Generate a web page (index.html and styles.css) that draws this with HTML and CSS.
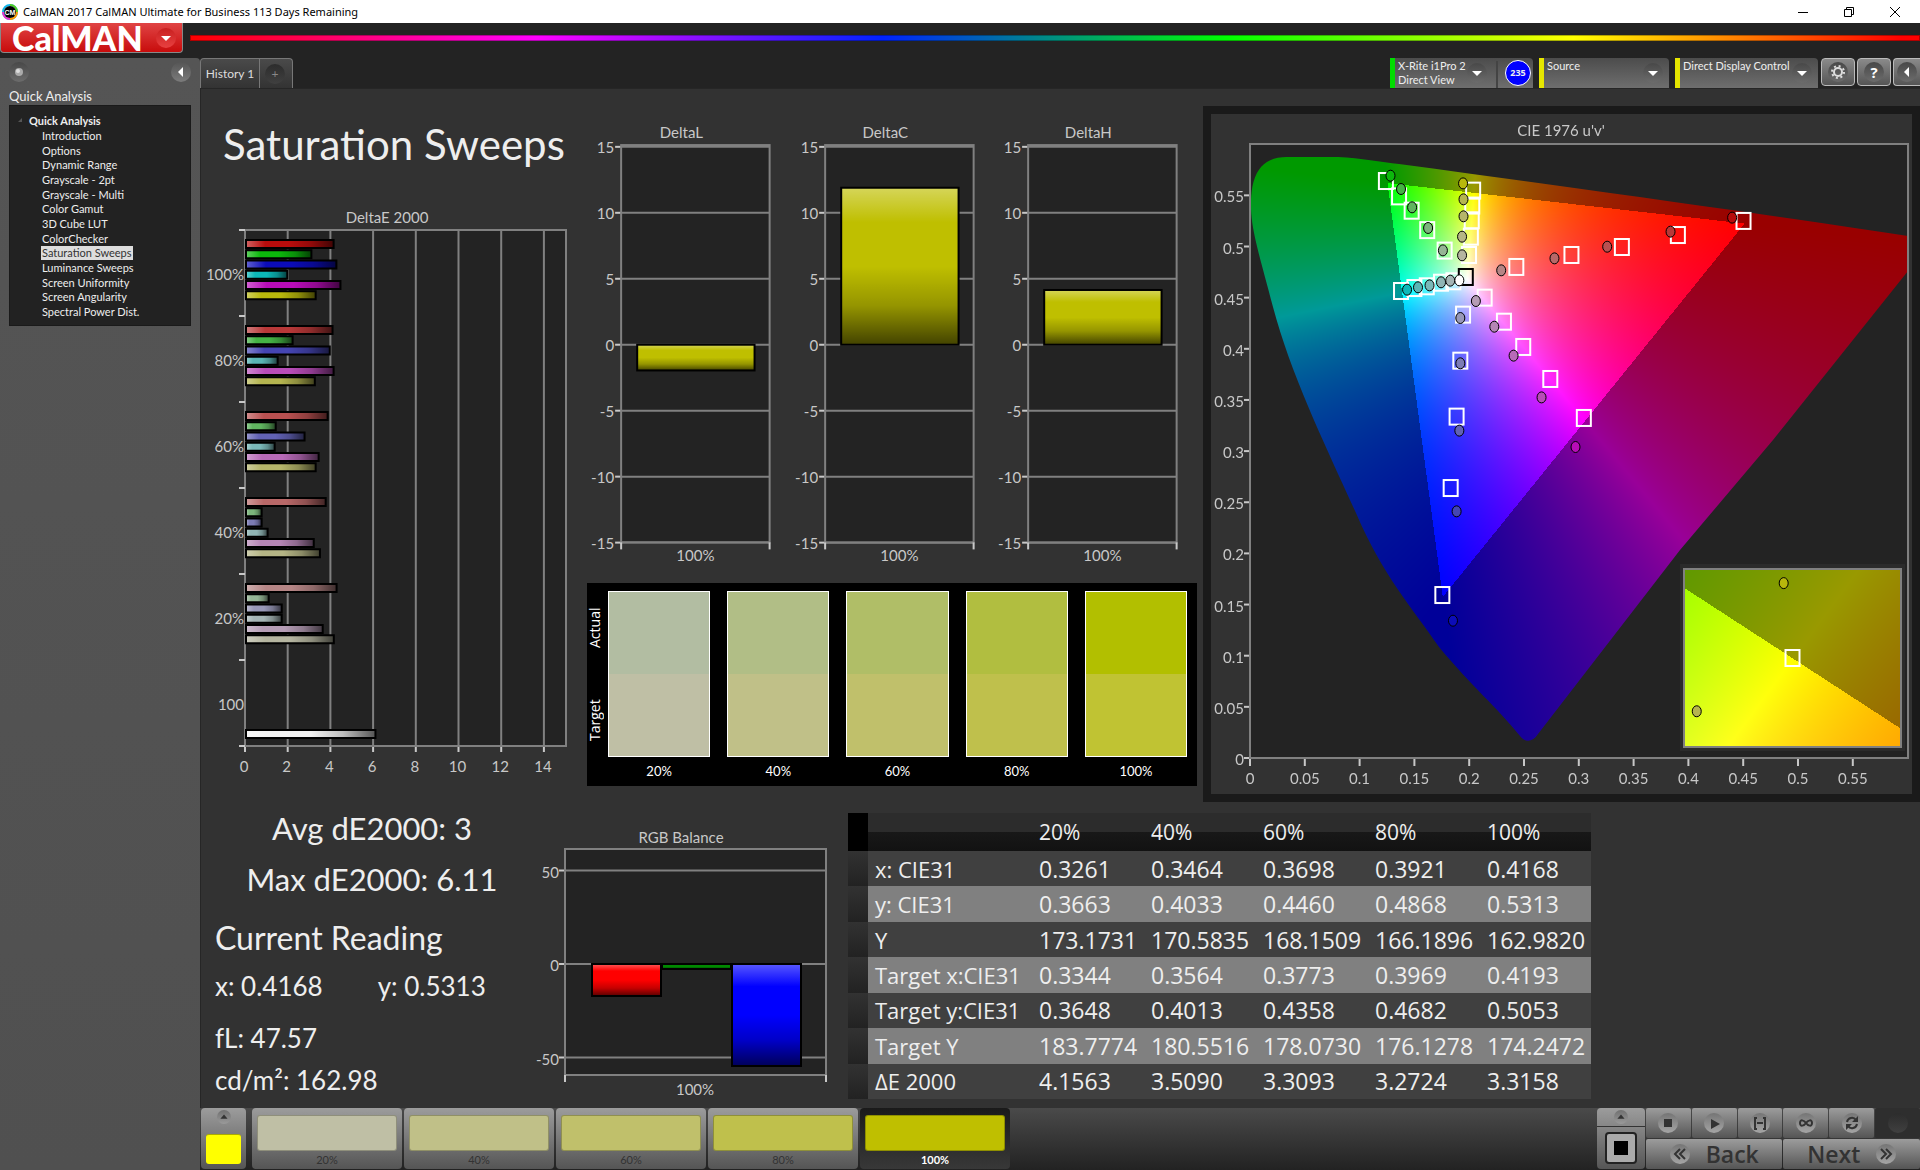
FILE: index.html
```html
<!DOCTYPE html>
<html lang="en">
<head>
    <meta charset="UTF-8">
    <meta name="viewport" content="width=device-width, initial-scale=1.0">
    <title>CalMAN 2017 CalMAN Ultimate for Business</title>
    <link rel="stylesheet" href="styles.css">
</head>
<body>
    <!-- window title -->
    <div class="titlebar">
        <svg class="app-icon" viewBox="0 0 16 16">
            <circle cx="8" cy="8" r="7" fill="none" stroke="#12b5e8" stroke-width="2"/>
            <path d="M8 1a7 7 0 0 1 7 7" fill="none" stroke="#5c2" stroke-width="2"/>
            <path d="M15 8a7 7 0 0 1-7 7" fill="none" stroke="#f90" stroke-width="2"/>
            <path d="M8 15a7 7 0 0 1-7-7" fill="none" stroke="#e3c" stroke-width="2"/>
            <circle cx="8" cy="8" r="6" fill="#000"/>
            <text x="8" y="11" text-anchor="middle">CM</text>
        </svg>
        <span class="window-title">CalMAN 2017 CalMAN Ultimate for Business 113 Days Remaining</span>
        <div class="window-buttons">
            <button aria-label="Minimize"><svg viewBox="0 0 12 12"><path d="M1 6.500h10"/></svg></button>
            <button aria-label="Restore"><svg viewBox="0 0 12 12"><path d="M1.500 3.500h7v7h-7zM3.500 3.500v-2h7v7h-2"/></svg></button>
            <button aria-label="Close"><svg viewBox="0 0 12 12"><path d="M1 1l10 10M11 1l-10 10"/></svg></button>
        </div>
    </div>

    <div class="brandbar">
        <button class="logo">CalMAN <span class="knob red"><svg viewBox="0 0 20 20"><path d="M5 8h10l-5 5z"/></svg></span></button>
        <div class="rainbow"></div>
    </div>

    <div class="app">
        <aside class="sidebar">
            <div class="sidebar-top">
                <span class="knob"><svg viewBox="0 0 20 20"><circle cx="10" cy="10" r="4" fill="#aaa"/><circle cx="9" cy="9" r="2" fill="#ddd"/></svg></span>
                <button class="knob light" aria-label="Collapse"><svg viewBox="0 0 20 20"><path d="M12 5v10l-5-5z"/></svg></button>
            </div>
            <div class="sidebar-title">Quick Analysis</div>
            <nav class="tree">
                <div class="tree-head">
                    <svg viewBox="0 0 6 6"><path d="M5 1v4H1z" fill="#555"/></svg>Quick Analysis
                </div>
                <ul>
                    <li><a href="#">Introduction</a></li>
                    <li><a href="#">Options</a></li>
                    <li><a href="#">Dynamic Range</a></li>
                    <li><a href="#">Grayscale - 2pt</a></li>
                    <li><a href="#">Grayscale - Multi</a></li>
                    <li><a href="#">Color Gamut</a></li>
                    <li><a href="#">3D Cube LUT</a></li>
                    <li><a href="#">ColorChecker</a></li>
                    <li><a href="#" class="current">Saturation Sweeps</a></li>
                    <li><a href="#">Luminance Sweeps</a></li>
                    <li><a href="#">Screen Uniformity</a></li>
                    <li><a href="#">Screen Angularity</a></li>
                    <li><a href="#">Spectral Power Dist.</a></li>
                </ul>
            </nav>
        </aside>

        <div class="content">
            <div class="toolbar">
                <div class="tabs">
                    <button class="tab">History 1</button>
                    <button class="tab add" aria-label="Add tab"><span class="knob dark">+</span></button>
                </div>
                <div class="devices">
                    <div class="device meter">
                        <button class="device-name green">X-Rite i1Pro 2<br>Direct View</button>
                        <span class="knob"><svg viewBox="0 0 20 20"><path d="M5 8h10l-5 5z"/></svg></span>
                        <span class="level">235</span>
                    </div>
                    <div class="device source">
                        <button class="device-name yellow">Source</button>
                        <span class="knob"><svg viewBox="0 0 20 20"><path d="M5 8h10l-5 5z"/></svg></span>
                    </div>
                    <div class="device display">
                        <button class="device-name yellow">Direct Display Control</button>
                        <span class="knob"><svg viewBox="0 0 20 20"><path d="M5 8h10l-5 5z"/></svg></span>
                    </div>
                    <button class="tool" aria-label="Settings"><span class="knob"><svg viewBox="0 0 20 20"><circle cx="10" cy="10" r="4" fill="none" stroke="#ddd" stroke-width="2"/><circle cx="10" cy="10" r="6" fill="none" stroke="#ddd" stroke-width="2" stroke-dasharray="2 2.700"/></svg></span></button>
                    <button class="tool" aria-label="Help"><span class="knob help">?</span></button>
                    <button class="tool last" aria-label="Collapse toolbar"><span class="knob"><svg viewBox="0 0 20 20"><path d="M12 5v10l-5-5z"/></svg></span></button>
                </div>
            </div>

            <main>
                <div class="top-row">
                    <section class="left">
                        <h1>Saturation Sweeps</h1>
                        <svg id="deltaE" class="chart" viewBox="0 0 375 575"></svg>
                    </section>
                    <section class="middle">
                        <div class="deltas">
                            <svg id="deltaL" class="chart" viewBox="0 0 203 455"></svg>
                            <svg id="deltaC" class="chart" viewBox="0 0 203 455"></svg>
                            <svg id="deltaH" class="chart" viewBox="0 0 203 455"></svg>
                        </div>
                        <div class="swatches">
                            <div class="side"><span>Actual</span><span>Target</span></div>
                            <div class="swatch"><div class="pair s20"></div>20%</div>
                            <div class="swatch"><div class="pair s40"></div>40%</div>
                            <div class="swatch"><div class="pair s60"></div>60%</div>
                            <div class="swatch"><div class="pair s80"></div>80%</div>
                            <div class="swatch"><div class="pair s100"></div>100%</div>
                        </div>
                    </section>
                    <section class="cie">
                        <canvas id="gamut" width="701" height="680"></canvas>
                        <svg id="cie" class="chart" viewBox="0 0 701 680"></svg>
                    </section>
                </div>

                <div class="bottom-row">
                    <section class="readings">
                        <div class="summary">
                            <p>Avg dE2000: 3</p>
                            <p>Max dE2000: 6.11</p>
                        </div>
                        <h2>Current Reading</h2>
                        <p class="xy"><span>x: 0.4168</span><span>y: 0.5313</span></p>
                        <p class="fl">fL: 47.57</p>
                        <p class="cd">cd/m²: 162.98</p>
                    </section>
                    <svg id="rgb" class="chart" viewBox="0 0 308 290"></svg>
                    <table>
                        <thead>
                            <tr><td class="handle"></td><th></th><th>20%</th><th>40%</th><th>60%</th><th>80%</th><th>100%</th></tr>
                        </thead>
                        <tbody>
                            <tr><td class="handle"></td><th>x: CIE31</th><td>0.3261</td><td>0.3464</td><td>0.3698</td><td>0.3921</td><td>0.4168</td></tr>
                            <tr><td class="handle"></td><th>y: CIE31</th><td>0.3663</td><td>0.4033</td><td>0.4460</td><td>0.4868</td><td>0.5313</td></tr>
                            <tr><td class="handle"></td><th>Y</th><td>173.1731</td><td>170.5835</td><td>168.1509</td><td>166.1896</td><td>162.9820</td></tr>
                            <tr><td class="handle"></td><th>Target x:CIE31</th><td>0.3344</td><td>0.3564</td><td>0.3773</td><td>0.3969</td><td>0.4193</td></tr>
                            <tr><td class="handle"></td><th>Target y:CIE31</th><td>0.3648</td><td>0.4013</td><td>0.4358</td><td>0.4682</td><td>0.5053</td></tr>
                            <tr><td class="handle"></td><th>Target Y</th><td>183.7774</td><td>180.5516</td><td>178.0730</td><td>176.1278</td><td>174.2472</td></tr>
                            <tr><td class="handle"></td><th>ΔE 2000</th><td>4.1563</td><td>3.5090</td><td>3.3093</td><td>3.2724</td><td>3.3158</td></tr>
                        </tbody>
                    </table>
                </div>
            </main>

            <footer>
                <button class="pattern" aria-label="Pattern">
                    <span class="knob small"><svg viewBox="0 0 20 20"><path d="M4 13h12l-6-7z"/></svg></span>
                    <span class="chip"></span>
                </button>
                <div class="steps">
                    <button class="step"><span class="t20"></span>20%</button>
                    <button class="step"><span class="t40"></span>40%</button>
                    <button class="step"><span class="t60"></span>60%</button>
                    <button class="step"><span class="t80"></span>80%</button>
                    <button class="step active"><span class="t100"></span>100%</button>
                </div>
                <button class="target" aria-label="Window size">
                    <span class="knob small"><svg viewBox="0 0 20 20"><path d="M4 13h12l-6-7z"/></svg></span>
                    <span class="frame"></span>
                </button>
                <div class="controls">
                    <button aria-label="Stop"><span class="knob pale"><svg viewBox="0 0 20 20"><path d="M6 6h8v8H6z"/></svg></span></button>
                    <button aria-label="Play"><span class="knob pale"><svg viewBox="0 0 20 20"><path d="M7 6l9 5-9 5z"/></svg></span></button>
                    <button aria-label="Read series"><span class="knob pale"><svg viewBox="0 0 20 20"><path d="M7 5H5v11h2M13 5h2v11h-2" fill="none" stroke="#333" stroke-width="2"/><path d="M7 9h2v2H7zM9 9h2v2H9zM11 9h2v2h-2z"/></svg></span></button>
                    <button aria-label="Continuous"><span class="knob pale"><svg viewBox="0 0 20 20"><path d="M10 10c-2-3-6-4-6 0s4 3 6 0 6-4 6 0-4 3-6 0z" fill="none" stroke="#333" stroke-width="2"/></svg></span></button>
                    <button aria-label="Refresh"><span class="knob pale"><svg viewBox="0 0 20 20"><path d="M5 9a5 5 0 0 1 9-2M15 11a5 5 0 0 1-9 2" fill="none" stroke="#333" stroke-width="2"/><path d="M16 3v6h-6zM4 17v-6h6z"/></svg></span></button>
                    <button class="off" aria-label="Record"><span class="knob dark"></span></button>
                    <button class="nav"><span class="knob pale"><svg viewBox="0 0 20 20"><path d="M10 5l-5 5 5 5M15 5l-5 5 5 5" fill="none" stroke="#333" stroke-width="2"/></svg></span>Back</button>
                    <button class="nav">Next<span class="knob pale"><svg viewBox="0 0 20 20"><path d="M5 5l5 5-5 5M10 5l5 5-5 5" fill="none" stroke="#333" stroke-width="2"/></svg></span></button>
                </div>
            </footer>
        </div>
    </div>
    <script src="charts.js"></script>
</body>
</html>
```
FILE: styles.css
```css
* {
    box-sizing: border-box;
}
body {
    margin: 0;
    min-height: 100vh;
    display: flex;
    flex-direction: column;
    background: #232323;
    color: #eee;
    font-family: Lato, sans-serif;
    font-size: 14px;
}
button {
    font-family: inherit;
    color: inherit;
    border: none;
    padding: 0;
    cursor: pointer;
}
h1, h2, p, ul {
    margin: 0;
    padding: 0;
    font-weight: normal;
}
svg {
    display: block;
}

/* title bar */
.titlebar {
    display: flex;
    align-items: center;
    height: 23px;
    background: #fff;
    color: #000;
    font-family: "Noto Sans", sans-serif;
    font-size: 11px;
}
.app-icon {
    width: 16px;
    height: 16px;
    margin: 0 5px 0 2px;
}
.app-icon text {
    font: bold 7px "Liberation Sans", sans-serif;
    fill: #fff;
}
.window-buttons {
    margin-left: auto;
    margin-right: 2px;
    display: flex;
}
.window-buttons button {
    width: 46px;
    background: none;
    display: flex;
    justify-content: center;
}
.window-buttons svg {
    width: 12px;
    height: 12px;
    fill: none;
    stroke: #000;
}

/* brand */
.brandbar {
    display: flex;
    height: 35px;
}
.logo {
    width: 183px;
    height: 30px;
    padding: 0 6px 0 11px;
    display: flex;
    align-items: center;
    justify-content: space-between;
    background: linear-gradient(#e04444, #c80c0c);
    border: 1px solid #888;
    border-top: none;
    border-radius: 0 0 4px 4px;
    color: #fff;
    font: 900 34px/28px Lato, sans-serif;
}
.rainbow {
    flex: 1;
    height: 6px;
    margin: 12px 0 0 7px;
    background: linear-gradient(90deg, #f00, #f0f 20%, #02f 40%, #0f0 60%, #ff0 80%, #f00 99%);
    border: 1px solid rgba(0, 0, 0, 0.3);
}

/* round icon holder */
.knob {
    display: flex;
    align-items: center;
    justify-content: center;
    flex: none;
    width: 20px;
    height: 20px;
    border-radius: 50%;
    background: linear-gradient(#484848, #6c6c6c);
}
.knob svg {
    width: 20px;
    height: 20px;
    fill: #fff;
}
.knob.red {
    background: linear-gradient(#c82020, #e84040);
}
.knob.light {
    background: linear-gradient(#555, #7c7c7c);
}
.knob.dark {
    background: linear-gradient(#2c2c2c, #404040);
    color: #888;
}
.knob.pale {
    background: linear-gradient(#757575, #a5a5a5);
}
.knob.pale svg,
.knob.small svg {
    fill: #333;
}
.knob.small {
    width: 14px;
    height: 14px;
    background: linear-gradient(#707070, #9a9a9a);
}
.knob.small svg {
    width: 12px;
    height: 12px;
}
.knob.help {
    font: bold 15px "Open Sans", sans-serif;
    color: #fff;
}

.app {
    flex: 1;
    display: flex;
}

/* sidebar */
.sidebar {
    width: 200px;
    padding: 4px 9px;
    background: linear-gradient(#555, #505050);
    border-radius: 0 4px 0 0;
}
.sidebar-top {
    display: flex;
    justify-content: space-between;
}
.sidebar-title {
    margin-top: 5px;
    line-height: 18px;
    font-size: 13px;
}
.tree {
    height: 221px;
    padding: 5px 0 6px 20px;
    background: #222;
    border: 1px solid #1a1a1a;
    display: flex;
    flex-direction: column;
}
.tree-head {
    display: flex;
    align-items: center;
    height: 18px;
    margin-left: -13px;
    gap: 6px;
    font-size: 11px;
    font-weight: bold;
}
.tree-head svg {
    width: 6px;
    height: 6px;
}
.tree ul {
    flex: 1;
    display: flex;
    flex-direction: column;
    justify-content: space-between;
    list-style: none;
    padding-left: 11px;
    font-size: 11px;
    line-height: 14px;
}
.tree a {
    display: inline-block;
    padding: 0 1px;
    color: inherit;
    text-decoration: none;
}
.tree a.current {
    background: #ddd;
    color: #333;
}

.content {
    flex: 1;
    min-width: 0;
    display: flex;
    flex-direction: column;
}

/* toolbar */
.toolbar {
    display: flex;
    justify-content: space-between;
    height: 30px;
}
.tabs {
    display: flex;
    border: 1px solid #777;
    border-bottom: none;
    border-radius: 4px 4px 0 0;
    background: linear-gradient(#4a4a4a, #333);
}
.tab {
    width: 58px;
    background: none;
    color: #ddd;
    font-size: 12px;
}
.tab.add {
    width: 33px;
    padding-left: 5px;
    border-left: 1px solid #777;
}
.devices {
    display: flex;
    gap: 2px;
}
.device {
    display: flex;
    align-items: center;
    margin-right: 4px;
    background: linear-gradient(#4c4c4c, #6e6e6e);
    border-radius: 4px 4px 0 0;
}
.meter {
    width: 143px;
    background: linear-gradient(#444, #444) 106px 3px / 2px 27px no-repeat, linear-gradient(#4c4c4c, #6e6e6e);
}
.source {
    width: 130px;
}
.display {
    width: 143px;
    margin-right: 1px;
}
.device-name {
    align-self: stretch;
    flex: 1;
    display: flex;
    padding: 1px 0 0 3px;
    background: none;
    text-align: left;
    white-space: nowrap;
    font-size: 11px;
    line-height: 14px;
    border-left: 5px solid #0d0;
}
.device-name.yellow {
    border-color: #e6e600;
}
.device .knob {
    margin-right: 6px;
}
.meter .knob {
    margin-right: 18px;
}
.level {
    width: 26px;
    height: 26px;
    margin-right: 2px;
    border: 1px solid #fff;
    border-radius: 50%;
    background: #00f;
    font: bold 9px/24px "Open Sans", sans-serif;
    text-align: center;
}
.tool {
    width: 34px;
    height: 28px;
    display: flex;
    align-items: center;
    justify-content: center;
    background: linear-gradient(#8a8a8a, #555);
    border: 1px solid #bbb;
    border-radius: 4px;
}
.tool.last {
    width: 27px;
    border-right: none;
    border-radius: 4px 0 0 4px;
}

/* workspace */
main {
    flex: 1;
    background: #323232;
    border-top: 1px solid #262626;
    box-shadow: inset 1px 0 #262626;
}
.chart {
    width: 100%;
    height: auto;
    overflow: visible;
}
.chart text {
    font-size: 15px;
    fill: #c8c8c8;
}
.chart .line {
    stroke: #808080;
    stroke-width: 2;
}
.chart .tick {
    stroke: #c8c8c8;
    stroke-width: 2;
}
.chart .plot {
    fill: #232323;
}
.chart .frame-line {
    fill: none;
    stroke: #808080;
    stroke-width: 2;
}
.top-row {
    display: grid;
    grid-template-columns: 375fr 628fr 717fr;
    padding-top: 17px;
}
.top-row section {
    min-width: 0;
}
h1 {
    height: 99px;
    padding: 5px 0 0 23px;
    font-size: 42px;
    line-height: 66px;
    white-space: nowrap;
}
.middle {
    padding: 14px 6px 0 5px;
}
.deltas {
    display: grid;
    grid-template-columns: repeat(3, 1fr);
    padding-right: 6px;
}
.swatches {
    display: flex;
    gap: 17px;
    height: 203px;
    margin: 6px 0 0 7px;
    padding: 8px 10px 0 0;
    background: #000;
    color: #fff;
    font-size: 13px;
}
.side {
    display: grid;
    grid-template-rows: 93px 93px;
    width: 16px;
    margin: -10px -12px 0 0;
    font: 14px "Open Sans", sans-serif;
}
.side span {
    writing-mode: vertical-rl;
    transform: rotate(180deg);
    line-height: 16px;
    text-align: center;
}
.swatch {
    flex: 1;
    text-align: center;
}
.pair {
    height: 166px;
    margin-bottom: 6px;
    border: 1px solid #fff;
}
.s20 { background: linear-gradient(#b2bda2 50%, #bfbfa5 50%); }
.s40 { background: linear-gradient(#b1be86 50%, #c0c088 50%); }
.s60 { background: linear-gradient(#b0be67 50%, #c0c06b 50%); }
.s80 { background: linear-gradient(#b1be40 50%, #bfc04c 50%); }
.s100 { background: linear-gradient(#b2bf00 50%, #c0c333 50%); }

.cie {
    display: grid;
    border: 8px solid #1a1a1a;
    background: #323232;
    align-self: start;
}
/* spectrum lies under the axes */
.cie canvas,
.cie svg {
    grid-area: 1 / 1;
    width: 100%;
}
.cie canvas {
    height: auto;
}
.cie .goal {
    fill: none;
    stroke: #fff;
    stroke-width: 2;
}
.cie .white {
    stroke: #000;
}
.cie .measured {
    stroke: #000;
    stroke-width: 1;
}

.bottom-row {
    display: grid;
    grid-template-columns: 340fr 308fr 743fr 329fr;
    align-items: start;
    padding-top: 1px;
}
.bottom-row > svg,
.bottom-row > table {
    margin-top: 10px;
}
.readings {
    min-width: 0;
    padding-left: 15px;
    font-size: 26px;
    white-space: nowrap;
}
.summary {
    margin-right: 11px;
    text-align: center;
    font-size: 31px;
    line-height: 51px;
}
.readings h2 {
    font-size: 32px;
    line-height: 50px;
    padding-top: 8px;
}
.xy {
    display: flex;
    gap: 55px;
    line-height: 46px;
}
.fl {
    line-height: 58px;
}
.cd {
    line-height: 26px;
}

table {
    width: 100%;
    height: 286px;
    border-collapse: collapse;
    table-layout: fixed;
    font-family: "Open Sans", sans-serif;
    font-size: 23px;
    line-height: 30px;
}
th, td {
    height: 35px;
    padding: 0;
    text-align: left;
    font-weight: normal;
    white-space: nowrap;
}
thead th {
    width: 112px;
    height: 38px;
    font-size: 21px;
}
thead th:nth-child(2) {
    width: 171px;
}
thead th:last-child {
    width: auto;
}
tbody th {
    padding-left: 7px;
    font-size: 22px;
}
thead tr {
    background: linear-gradient(#2c2c2c 50%, #181818 50%, #121212);
}
tbody tr {
    background: #404040;
}
tbody tr:nth-child(even) {
    background: #808080;
}
.handle {
    width: 20px;
    background: linear-gradient(#323232, #222);
}
thead .handle {
    background: #000;
}

/* bottom bar */
footer {
    display: flex;
    height: 62px;
    background: linear-gradient(#4a4a4a, #222);
}
footer button {
    background: linear-gradient(#9c9c9c, #555);
    color: #333;
}
.pattern, .target {
    display: flex;
    flex-direction: column;
    align-items: center;
    gap: 8px;
    width: 45px;
    margin: 0 6px 1px 1px;
    padding-top: 2px;
    border-radius: 4px;
}
.chip {
    width: 35px;
    height: 30px;
    margin-top: 2px;
    background: #ff0;
    border-top: 1px solid #aa0;
    border-radius: 3px;
}
.steps {
    display: flex;
    gap: 2px;
    flex: 1;
}
.step {
    width: 150px;
    height: 61px;
    padding: 7px 5px 3px;
    border-radius: 4px;
    font-size: 11px;
    line-height: 18px;
}
.step span {
    display: block;
    height: 36px;
    border: 1px solid rgba(0, 0, 0, 0.25);
    border-radius: 3px;
}
.step.active {
    background: linear-gradient(#1a1a1a, #383838);
    color: #fff;
    font-weight: bold;
}
.step .t20 { background: #bfbfa5; }
.step .t40 { background: #c0c088; }
.step .t60 { background: #c0c06b; }
.step .t80 { background: #bfc04c; }
.step .t100 { background: #bfbf00; }
.target {
    width: 48px;
    margin: 0 1px 1px 0;
    gap: 8px;
    background: linear-gradient(#333, #333) 0 18px / 100% 1px no-repeat, linear-gradient(#9c9c9c, #555);
}
.frame {
    width: 32px;
    height: 32px;
    border: 2px solid #222;
    border-radius: 4px;
    background: linear-gradient(#000, #000) center / 14px 14px no-repeat #aaa;
}
.controls {
    display: grid;
    grid-template-columns: repeat(6, 1fr);
    grid-template-rows: 30px 30px;
    gap: 1px;
    width: 274px;
}
.controls button {
    display: flex;
    align-items: center;
    justify-content: center;
    border-radius: 2px;
}
.controls .off {
    background: #2e2e2e;
}
.controls .nav {
    grid-column: span 3;
    gap: 16px;
    font: 600 23px "Open Sans", sans-serif;
}
```
FILE: charts.js
```js
var NS = 'http://www.w3.org/2000/svg';

function add(parent, tag, attrs, text) {
    var el = document.createElementNS(NS, tag);
    for (var key in attrs) el.setAttribute(key, attrs[key]);
    if (text !== undefined) el.textContent = text;
    parent.appendChild(el);
    return el;
}

function line(svg, cls, x1, y1, x2, y2) {
    add(svg, 'line', { class: cls, x1: x1, y1: y1, x2: x2, y2: y2 });
}

function label(svg, x, y, anchor, text) {
    add(svg, 'text', { x: x, y: y, 'text-anchor': anchor }, text);
}

// light to dark sheen that goes over every bar
function sheen(svg, vertical) {
    var g = add(svg, 'linearGradient', { id: svg.id + 'Sheen', x2: vertical ? 0 : 1, y2: vertical ? 1 : 0 });
    add(g, 'stop', { offset: 0, 'stop-color': '#fff', 'stop-opacity': 0.35 });
    add(g, 'stop', { offset: 0.22, 'stop-color': '#fff', 'stop-opacity': 0 });
    add(g, 'stop', { offset: 0.5, 'stop-color': '#000', 'stop-opacity': 0 });
    add(g, 'stop', { offset: 0.75, 'stop-color': '#000', 'stop-opacity': 0.22 });
    add(g, 'stop', { offset: 1, 'stop-color': '#000', 'stop-opacity': 0.65 });
}

function bar(svg, x, y, w, h, color) {
    var box = { x: x, y: y, width: w, height: h, fill: color };
    add(svg, 'rect', box);
    box.fill = 'url(#' + svg.id + 'Sheen)';
    box.stroke = '#000';
    box['stroke-width'] = 2;
    add(svg, 'rect', box);
}

var colors = [
    ['#b80c0c', '#0cb80c', '#0c0cb8', '#0cb8b8', '#b80cb8', '#b8b80c'],
    ['#b83838', '#45b345', '#4545b3', '#5ab5b5', '#b84cb8', '#b5b550'],
    ['#b85050', '#60b560', '#6262b5', '#7ab8b8', '#b86ab8', '#b5b56a'],
    ['#b86868', '#7cb57c', '#7c7cb5', '#90b5b5', '#b585b5', '#b5b585'],
    ['#b58585', '#95b595', '#9898b8', '#a5b5b5', '#b59cb5', '#b5b5a0']
];

function drawDeltaE() {
    var svg = document.getElementById('deltaE');
    var values = [
        [4.15, 3.11, 4.28, 1.98, 4.47, 3.31],
        [4.10, 2.23, 3.97, 1.53, 4.15, 3.27],
        [3.87, 1.44, 2.79, 1.39, 3.45, 3.31],
        [3.78, 0.78, 0.78, 1.06, 3.22, 3.51],
        [4.29, 1.11, 1.72, 1.72, 3.64, 4.16]
    ];
    var names = ['100%', '80%', '60%', '40%', '20%', '100'];
    var left = 45, right = 366, top = 25, bottom = 541, unit = 21.35, step = 86;
    sheen(svg, false);
    add(svg, 'rect', { class: 'plot', x: left, y: top, width: right - left, height: bottom - top });
    label(svg, 187, 18, 'middle', 'DeltaE 2000');
    for (var v = 0; v < 15; v += 2) {
        line(svg, 'line', left + v * unit, top, left + v * unit, bottom);
        line(svg, 'tick', left + v * unit, bottom, left + v * unit, bottom + 6);
        label(svg, left + v * unit - 1, bottom + 26, 'middle', v);
    }
    add(svg, 'rect', { class: 'frame-line', x: left, y: top, width: right - left, height: bottom - top });
    names.forEach(function (name, i) {
        line(svg, 'tick', left - 6, top + i * step, left, top + i * step);
        label(svg, left - 1, top + i * step + 50, 'end', name);
    });
    line(svg, 'tick', left - 6, bottom, left, bottom);
    values.forEach(function (row, i) {
        row.forEach(function (value, j) {
            bar(svg, left + 1, top + i * step + 10 + j * 10.25, value * unit - 1, 8, colors[i][j]);
        });
    });
    bar(svg, left + 1, 525, 6.11 * unit - 1, 8, '#f2f2f2');
}

function drawDelta(id, title, value) {
    var svg = document.getElementById(id);
    var left = 41, right = 189, zero = 224, unit = 13.15;
    sheen(svg, true);
    add(svg, 'rect', { class: 'plot', x: left, y: 25, width: right - left, height: 396 });
    label(svg, 101, 18, 'middle', title);
    for (var v = 15; v >= -15; v -= 5) {
        var y = zero - v * unit;
        line(svg, 'line', left, y, right, y);
        line(svg, 'tick', left - 6, y, left, y);
        label(svg, left - 7, y + 6, 'end', v);
    }
    add(svg, 'rect', { class: 'frame-line', x: left, y: 25, width: right - left, height: 396 });
    line(svg, 'tick', left, 421, left, 428);
    line(svg, 'tick', right, 421, right, 428);
    var h = Math.abs(value) * unit;
    bar(svg, 57, value > 0 ? zero - h : zero, 117, h, '#bfbf00');
    label(svg, 115, 440, 'middle', '100%');
}

function drawRgb() {
    var svg = document.getElementById('rgb');
    var left = 25, right = 286, top = 36, bottom = 262, zero = 151;
    sheen(svg, true);
    add(svg, 'rect', { class: 'plot', x: left, y: top, width: right - left, height: bottom - top });
    label(svg, 141, 30, 'middle', 'RGB Balance');
    [50, 0, -50].forEach(function (v) {
        var y = zero - v * 1.87;
        line(svg, 'line', left, y, right, y);
        line(svg, 'tick', left - 6, y, left, y);
        label(svg, left - 6, y + 7, 'end', v);
    });
    add(svg, 'rect', { class: 'frame-line', x: left, y: top, width: right - left, height: bottom - top });
    line(svg, 'tick', left, bottom, left, bottom + 7);
    line(svg, 'tick', right, bottom, right, bottom + 7);
    bar(svg, 52, zero, 69, 32, '#f00');
    bar(svg, 122, zero, 69, 5, '#080');
    bar(svg, 192, zero, 69, 102, '#00f');
    label(svg, 155, 282, 'middle', '100%');
}

// CIE plot area in chart units
var P = { left: 39, right: 697, top: 30, bottom: 644, u: 1096, v: 1023 };
// zoomed box round the selected target, in x,y
var Z = { left: 473, right: 690, top: 455, bottom: 633, x: 0.4193, y: 0.5053, sx: 3520, sy: 2880 };

// Rec.709 colour of a chromaticity, darker outside the triangle
function chroma(x, y) {
    var X = x / y, W = (1 - x - y) / y;
    var rgb = [
        3.2406 * X - 1.5372 - 0.4986 * W,
        -0.9689 * X + 1.8758 + 0.0415 * W,
        0.0557 * X - 0.2040 + 1.0570 * W
    ];
    var k = Math.min.apply(null, rgb) < 0 ? 153 : 255;
    var max = Math.max.apply(null, rgb);
    return rgb.map(function (c) { return Math.max(0, c) / max * k; });
}

function locusPath() {
    return new Path2D('M40 95C39 60 50 43 76 43L127 43C150 44 170 48 188 50C380 76 560 101 697 122' +
        'L697 157L562 326L469 436L327 620C322 628 314 629 309 622C285 592 262 574 228 533' +
        'C200 492 172 462 145 399C110 322 80 260 62 193C50 146 41 120 40 95Z');
}

function fill(img, x0, y0, x1, y1, toXy) {
    for (var py = y0; py < y1; py++) {
        for (var px = x0; px < x1; px++) {
            var xy = toXy(px, py);
            var c = chroma(xy[0], Math.max(xy[1], 0.0001));
            var i = (py * img.width + px) * 4;
            img.data[i] = c[0];
            img.data[i + 1] = c[1];
            img.data[i + 2] = c[2];
            img.data[i + 3] = 255;
        }
    }
}

function paintGamut() {
    var ctx = document.getElementById('gamut').getContext('2d');
    var img = ctx.createImageData(701, 680);
    fill(img, P.left, P.top, P.right, P.bottom, function (px, py) {
        var u = (px - P.left) / P.u, v = (P.bottom - py) / P.v;
        var d = 6 * u - 16 * v + 12;
        return [9 * u / d, 4 * v / d];
    });
    ctx.putImageData(img, 0, 0);
    // keep only what is inside the locus
    ctx.globalCompositeOperation = 'destination-in';
    ctx.fill(locusPath());
    ctx.globalCompositeOperation = 'destination-over';
    ctx.fillStyle = '#232323';
    ctx.fillRect(P.left, P.top, P.right - P.left, P.bottom - P.top);
    ctx.globalCompositeOperation = 'source-over';
    ctx.fillStyle = '#2b2b2b';
    ctx.fillRect(Z.left - 4, Z.top - 5, Z.right - Z.left + 8, Z.bottom - Z.top + 9);
    var zoom = ctx.getImageData(0, 0, 701, 680);
    var cx = (Z.left + Z.right) / 2, cy = (Z.top + Z.bottom) / 2;
    fill(zoom, Z.left, Z.top, Z.right, Z.bottom, function (px, py) {
        return [Z.x + (px - cx) / Z.sx, Z.y - (py - cy) / Z.sy];
    });
    ctx.putImageData(zoom, 0, 0);
}

// rows: red, green, blue, cyan, magenta, yellow, from 100% to 20%
var goals = [
    [[0.4503, 0.5250], [0.3904, 0.5112], [0.3393, 0.4995], [0.2933, 0.4917], [0.2430, 0.4800]],
    [[0.1240, 0.5640], [0.1360, 0.5490], [0.1475, 0.5350], [0.1617, 0.5160], [0.1776, 0.4960]],
    [[0.1755, 0.1593], [0.1831, 0.2639], [0.1885, 0.3337], [0.1919, 0.3884], [0.1944, 0.4334]],
    [[0.1378, 0.4565], [0.1500, 0.4594], [0.1613, 0.4611], [0.1743, 0.4646], [0.1856, 0.4660]],
    [[0.3046, 0.3324], [0.2740, 0.3705], [0.2493, 0.4018], [0.2317, 0.4265], [0.2141, 0.4500]],
    [[0.2036, 0.5546], [0.2028, 0.5400], [0.2023, 0.5256], [0.2015, 0.5096], [0.1998, 0.4917]]
];
var measured = [
    [[0.4399, 0.5282], [0.3837, 0.5145], [0.3259, 0.4998], [0.2778, 0.4884], [0.2292, 0.4767]],
    [[0.1282, 0.5692], [0.1378, 0.5562], [0.1479, 0.5383], [0.1625, 0.5181], [0.1760, 0.4962]],
    [[0.1852, 0.1342], [0.1885, 0.2411], [0.1910, 0.3200], [0.1919, 0.3858], [0.1919, 0.4301]],
    [[0.1433, 0.4578], [0.1533, 0.4601], [0.1638, 0.4620], [0.1743, 0.4650], [0.1827, 0.4666]],
    [[0.2970, 0.3040], [0.2660, 0.3525], [0.2405, 0.3933], [0.2229, 0.4216], [0.2061, 0.4467]],
    [[0.1944, 0.5617], [0.1948, 0.5461], [0.1948, 0.5295], [0.1935, 0.5096], [0.1935, 0.4914]]
];

function goal(svg, x, y, cls) {
    add(svg, 'rect', { class: cls, x: x - 7, y: y - 8, width: 14, height: 16 });
}

function dot(svg, x, y, color) {
    add(svg, 'ellipse', { class: 'measured', cx: x, cy: y, rx: 4.5, ry: 5.5, fill: color });
}

function drawCie() {
    var svg = document.getElementById('cie');
    label(svg, 350, 22, 'middle', "CIE 1976 u'v'");
    for (var i = 0; i < 12; i++) {
        var n = String(i * 5 / 100);
        var x = P.left + i * 0.05 * P.u, y = P.bottom - i * 0.05 * P.v;
        line(svg, 'tick', x, P.bottom, x, P.bottom + 8);
        line(svg, 'tick', P.left - 6, y, P.left, y);
        label(svg, x, P.bottom + 26, 'middle', n);
        label(svg, P.left - 6, y + 7, 'end', n);
    }
    add(svg, 'rect', { class: 'frame-line', x: P.left, y: P.top, width: P.right - P.left, height: P.bottom - P.top });
    function at(p) {
        return [P.left + p[0] * P.u, P.bottom - p[1] * P.v];
    }
    goals.forEach(function (row) {
        row.forEach(function (p) {
            goal(svg, at(p)[0], at(p)[1], 'goal');
        });
    });
    var w = at([0.1969, 0.4702]);
    goal(svg, w[0], w[1], 'goal white');
    measured.forEach(function (row, hue) {
        row.forEach(function (p, level) {
            dot(svg, at(p)[0], at(p)[1], colors[level][[0, 1, 2, 3, 4, 5][hue]]);
        });
    });
    w = at([0.191, 0.4669]);
    dot(svg, w[0], w[1], '#fff');

    // zoomed box
    add(svg, 'rect', { class: 'frame-line', x: Z.left, y: Z.top, width: Z.right - Z.left, height: Z.bottom - Z.top });
    var cx = (Z.left + Z.right) / 2, cy = (Z.top + Z.bottom) / 2;
    goal(svg, cx, cy, 'goal');
    dot(svg, cx + (0.4168 - Z.x) * Z.sx, cy - (0.5313 - Z.y) * Z.sy, '#b8b80c');
    dot(svg, cx + (0.3921 - Z.x) * Z.sx, cy - (0.4868 - Z.y) * Z.sy, '#b5b550');
}

drawDeltaE();
drawDelta('deltaL', 'DeltaL', -1.95);
drawDelta('deltaC', 'DeltaC', 11.9);
drawDelta('deltaH', 'DeltaH', 4.15);
drawRgb();
paintGamut();
drawCie();
```
